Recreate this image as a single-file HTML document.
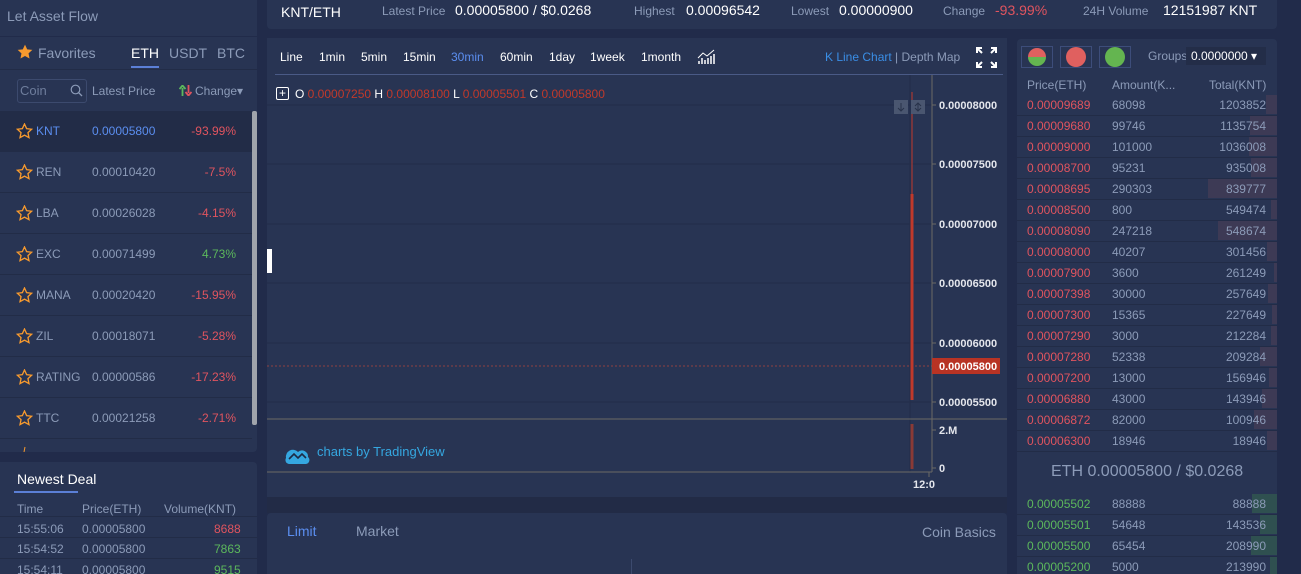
<!DOCTYPE html>
<html><head><meta charset="utf-8"><style>
*{margin:0;padding:0;box-sizing:border-box}
html,body{width:1301px;height:574px;overflow:hidden}
body{background:#212b4a;font-family:"Liberation Sans",sans-serif;font-size:12px;color:#8c9bb8;position:relative}
.a{position:absolute;white-space:nowrap}
.p{position:absolute;background:#283453}
.r{color:#e0545f}.g{color:#5cb85c}.w{color:#fff}
.red{color:#c0392b}
</style></head><body>
<div class="p" style="left:0;top:0;width:257px;height:36px"></div>
<div class="a" style="left:7px;top:8px;font-size:14px;color:#8c9bb8">Let Asset Flow</div>
<div class="p" style="left:0;top:37px;width:257px;height:415px;border-radius:0 0 4px 0"></div>
<div class="a" style="left:0;top:69px;width:257px;height:1px;background:#222c47"></div>
<svg class="a" style="left:17px;top:44px" width="16" height="16" viewBox="0 0 24 24"><path d="M12 1l3.3 7 7.7.9-5.7 5.2 1.5 7.6L12 18l-6.8 3.7 1.5-7.6L1 8.9 8.7 8z" fill="#f79a2e"/></svg>
<div class="a" style="left:38px;top:45px;font-size:14px">Favorites</div>
<div class="a w" style="left:131px;top:45px;font-size:14px">ETH</div>
<div class="a" style="left:131px;top:66px;width:28px;height:2px;background:#5b7fd6"></div>
<div class="a" style="left:169px;top:45px;font-size:14px">USDT</div>
<div class="a" style="left:217px;top:45px;font-size:14px">BTC</div>
<div class="a" style="left:17px;top:79px;width:70px;height:24px;border:1px solid #3c4a6e;border-radius:3px"></div>
<div class="a" style="left:20px;top:83px;font-size:13px;color:#6e7d9c">Coin</div>
<svg class="a" style="left:70px;top:84px" width="13" height="13" viewBox="0 0 13 13"><circle cx="5.5" cy="5.5" r="4.3" fill="none" stroke="#8c9bb8" stroke-width="1.2"/><path d="M8.7 8.7L12 12" stroke="#8c9bb8" stroke-width="1.3"/></svg>
<div class="a" style="left:92px;top:84px">Latest Price</div>
<svg class="a" style="left:179px;top:85px" width="13" height="11" viewBox="0 0 13 11"><path d="M3.5 11V3M0.5 4l3-3.5 3 3.5" stroke="#5cb85c" stroke-width="1.8" fill="none"/><path d="M9.5 0v8M6.5 7l3 3.5 3-3.5" stroke="#e0545f" stroke-width="1.8" fill="none"/></svg>
<div class="a" style="left:195px;top:84px">Change▾</div>
<div class="a" style="left:0;top:111px;width:252px;height:41px;background:#222c47"></div>
<div class="a" style="left:252px;top:111px;width:5px;height:314px;background:#a0a4ab;border-radius:2px"></div>
<div id="coins"></div>
<div class="p" style="left:0;top:462px;width:257px;height:112px;border-radius:0 4px 0 0"></div>
<div class="a w" style="left:17px;top:471px;font-size:14px">Newest Deal</div>
<div class="a" style="left:14px;top:491px;width:64px;height:2px;background:#5b7fd6"></div>
<div class="a" style="left:17px;top:502px">Time</div>
<div class="a" style="left:82px;top:502px">Price(ETH)</div>
<div class="a" style="left:164px;top:502px">Volume(KNT)</div>
<div class="a" style="left:0;top:516px;width:257px;height:1px;background:#222c47"></div>
<div class="a" style="left:17px;top:522px">15:55:06</div><div class="a" style="left:82px;top:522px">0.00005800</div><div class="a r" style="left:214px;top:522px">8688</div>
<div class="a" style="left:0;top:537px;width:257px;height:1px;background:#222c47"></div>
<div class="a" style="left:17px;top:542px">15:54:52</div><div class="a" style="left:82px;top:542px">0.00005800</div><div class="a g" style="left:214px;top:542px">7863</div>
<div class="a" style="left:0;top:558px;width:257px;height:1px;background:#222c47"></div>
<div class="a" style="left:17px;top:563px">15:54:11</div><div class="a" style="left:82px;top:563px">0.00005800</div><div class="a g" style="left:214px;top:563px">9515</div>
<div class="p" style="left:267px;top:0;width:1010px;height:29px;border-radius:0 0 4px 4px"></div>
<div class="a w" style="left:281px;top:4px;font-size:14px">KNT/ETH</div>
<div class="a" style="left:382px;top:4px">Latest Price</div>
<div class="a w" style="left:455px;top:2px;font-size:14px">0.00005800 / $0.0268</div>
<div class="a" style="left:634px;top:4px">Highest</div>
<div class="a w" style="left:686px;top:2px;font-size:14px">0.00096542</div>
<div class="a" style="left:791px;top:4px">Lowest</div>
<div class="a w" style="left:839px;top:2px;font-size:14px">0.00000900</div>
<div class="a" style="left:943px;top:4px">Change</div>
<div class="a r" style="left:995px;top:2px;font-size:14px">-93.99%</div>
<div class="a" style="left:1083px;top:4px">24H Volume</div>
<div class="a w" style="left:1163px;top:2px;font-size:14px">12151987 KNT</div>
<div class="p" style="left:267px;top:38px;width:740px;height:460px"></div>
<div class="a" style="left:267px;top:497px;width:740px;height:16px;background:#222b46"></div>
<div class="a w" style="top:50px;left:280px">Line</div>
<div class="a w" style="top:50px;left:319px">1min</div>
<div class="a w" style="top:50px;left:361px">5min</div>
<div class="a w" style="top:50px;left:403px">15min</div>
<div class="a" style="top:50px;left:451px;color:#5b8ef0">30min</div>
<div class="a w" style="top:50px;left:500px">60min</div>
<div class="a w" style="top:50px;left:549px">1day</div>
<div class="a w" style="top:50px;left:590px">1week</div>
<div class="a w" style="top:50px;left:641px">1month</div>
<svg class="a" style="left:697px;top:48px" width="18" height="16" viewBox="0 0 18 16"><path d="M1 10l5-5 4 3 7-6" stroke="#fff" fill="none"/><path d="M2 16v-3M5 16v-6M8 16v-4M11 16v-6M14 16v-8M17 16v-10" stroke="#fff" stroke-width="1.5"/></svg>
<div class="a" style="top:50px;left:825px;color:#3a8ee6">K Line Chart <span style="color:#8c9bb8">| Depth Map</span></div>
<svg class="a" style="left:976px;top:47px" width="21" height="21" viewBox="0 0 21 21" stroke="#fff" stroke-width="2" fill="none"><path d="M1 6V1h5M1 1l5 5M20 6V1h-5M20 1l-5 5M1 15v5h5M1 20l5-5M20 15v5h-5M20 20l-5-5"/></svg>
<div class="a" style="left:275px;top:74px;width:728px;height:1px;background:#4a5a86"></div>
<svg class="a" style="left:267px;top:75px" width="740" height="420">
<g stroke="#222d4a" stroke-width="1">
<line x1="0" y1="30" x2="665" y2="30"/><line x1="0" y1="89" x2="665" y2="89"/><line x1="0" y1="149" x2="665" y2="149"/><line x1="0" y1="208" x2="665" y2="208"/><line x1="0" y1="268" x2="665" y2="268"/><line x1="0" y1="327" x2="665" y2="327"/>
<line x1="643" y1="0" x2="643" y2="397"/>
</g>
<line x1="665" y1="0" x2="665" y2="397" stroke="#6b6a66"/>
<line x1="0" y1="344" x2="740" y2="344" stroke="#6b6a66"/>
<line x1="0" y1="397" x2="665" y2="397" stroke="#6b6a66"/>
<line x1="0" y1="291" x2="665" y2="291" stroke="#b0463c" stroke-dasharray="2,2" stroke-width="0.8"/>
<line x1="645" y1="17" x2="645" y2="325" stroke="#c0392b"/>
<rect x="643.5" y="119" width="3" height="206" fill="#c0392b"/>
<rect x="643.5" y="349" width="3" height="45" fill="#8a3a36"/>
<rect x="627" y="25" width="14" height="14" fill="#4a5670"/><rect x="644" y="25" width="14" height="14" fill="#4a5670"/>
<path d="M634 28v8M631 33l3 3 3-3M651 28v8M648 31l3-3 3 3M648 33l3 3 3-3" stroke="#28324a" fill="none"/>
<g stroke="#6b6a66"><line x1="665" y1="30" x2="669" y2="30"/><line x1="665" y1="89" x2="669" y2="89"/><line x1="665" y1="149" x2="669" y2="149"/><line x1="665" y1="208" x2="669" y2="208"/><line x1="665" y1="268" x2="669" y2="268"/><line x1="665" y1="327" x2="669" y2="327"/><line x1="665" y1="355" x2="669" y2="355"/><line x1="665" y1="393" x2="669" y2="393"/><line x1="662" y1="397" x2="662" y2="402"/></g>
<rect x="665" y="283" width="68" height="16" fill="#b83324"/>
<g fill="#e4e6ec" font-family="Liberation Sans" font-size="11" font-weight="bold">
<text x="672" y="34">0.00008000</text><text x="672" y="153">0.00007000</text><text x="672" y="93">0.00007500</text><text x="672" y="212">0.00006500</text><text x="672" y="272">0.00006000</text><text x="672" y="331">0.00005500</text><text x="672" y="295" fill="#fff">0.00005800</text><text x="672" y="359">2.M</text><text x="672" y="397">0</text><text x="646" y="413">12:0</text>
</g>
<path d="M19 383a7 7 0 0 1 12-6 6 6 0 0 1 10 5 4 4 0 0 1-2 7H22a4 4 0 0 1-3-6z" fill="#35a7e0"/>
<path d="M22 384l5-5 4 4 4-4 4 4" stroke="#1d2a45" stroke-width="1.6" fill="none"/>
<text x="50" y="381" fill="#35a7e0" font-family="Liberation Sans" font-size="13">charts by TradingView</text>
</svg>
<div class="a" style="left:267px;top:249px;width:5px;height:24px;background:#fff"></div>
<div class="a" style="left:276px;top:87px;width:13px;height:13px;border:1px solid #fff;border-radius:2px;color:#fff;font-size:12px;line-height:10px;text-align:center">+</div>
<div class="a" style="left:295px;top:87px;color:#fff">O <span class="red">0.00007250</span> H <span class="red">0.00008100</span> L <span class="red">0.00005501</span> C <span class="red">0.00005800</span></div>
<div class="p" style="left:267px;top:513px;width:740px;height:61px;border-radius:4px 4px 0 0"></div>
<div class="a" style="left:287px;top:523px;font-size:14px;color:#5b8ef0">Limit</div>
<div class="a" style="left:356px;top:523px;font-size:14px">Market</div>
<div class="a" style="left:922px;top:524px;font-size:14px">Coin Basics</div>
<div class="a" style="left:631px;top:559px;width:1px;height:15px;background:#3c4a6e"></div>
<div class="p" style="left:1017px;top:39px;width:260px;height:535px;border-radius:4px 4px 0 0"></div>
<div class="a" style="left:1021px;top:46px;width:32px;height:22px;border:1px solid #3d4d7a"></div>
<svg class="a" style="left:1027px;top:47px" width="20" height="20"><path d="M1 10a9 9 0 0 1 18 0z" fill="#e0605f"/><path d="M1 10a9 9 0 0 0 18 0z" fill="#64b550"/></svg>
<div class="a" style="left:1060px;top:46px;width:32px;height:22px;border:1px solid #3d4d7a"></div>
<div class="a" style="left:1066px;top:47px;width:20px;height:20px;border-radius:50%;background:#e0605f"></div>
<div class="a" style="left:1099px;top:46px;width:32px;height:22px;border:1px solid #3d4d7a"></div>
<div class="a" style="left:1105px;top:47px;width:20px;height:20px;border-radius:50%;background:#64b550"></div>
<div class="a" style="left:1148px;top:49px">Groups</div>
<div class="a" style="left:1186px;top:47px;width:80px;height:18px;background:#232d48"></div>
<div class="a w" style="left:1191px;top:49px">0.0000000 ▾</div>
<div class="a" style="left:1027px;top:78px">Price(ETH)</div>
<div class="a" style="left:1112px;top:78px">Amount(K...</div>
<div class="a" style="left:1209px;top:78px">Total(KNT)</div>
<div id="ob"></div>
<div class="a" style="left:1017px;top:454px;width:260px;height:36px;background:#283453"></div>
<div class="a" style="left:1051px;top:463px;font-size:16px;color:#8c9bb8">ETH 0.00005800 / $0.0268</div>
<script>
var coins=[["KNT","0.00005800","-93.99%"],["REN","0.00010420","-7.5%"],["LBA","0.00026028","-4.15%"],["EXC","0.00071499","4.73%"],["MANA","0.00020420","-15.95%"],["ZIL","0.00018071","-5.28%"],["RATING","0.00000586","-17.23%"],["TTC","0.00021258","-2.71%"]];
var h="";coins.forEach(function(c,i){var y=111+i*41;
h+='<svg class="a" style="left:16px;top:'+(y+12)+'px" width="17" height="16" viewBox="0 0 24 24"><path d="M12 1.5l3.2 6.9 7.5.9-5.5 5.1 1.5 7.5L12 18.2l-6.7 3.7 1.5-7.5-5.5-5.1 7.5-.9z" fill="none" stroke="#f79a2e" stroke-width="2"/></svg>';
h+='<div class="a" style="left:36px;top:'+(y+13)+'px;color:'+(i==0?'#5b8ef0':'#8c9bb8')+'">'+c[0]+'</div>';
h+='<div class="a" style="left:92px;top:'+(y+13)+'px;color:'+(i==0?'#5b8ef0':'#8c9bb8')+'">'+c[1]+'</div>';
h+='<div class="a '+(c[2][0]=='-'?'r':'g')+'" style="right:'+(1301-236)+'px;top:'+(y+13)+'px">'+c[2]+'</div>';
h+='<div class="a" style="left:0;top:'+(y+40)+'px;width:252px;height:1px;background:#222c47"></div>';});
h+='<svg class="a" style="left:16px;top:446px" width="17" height="6"><path d="M8 6l1-5" stroke="#f79a2e"/></svg>';
document.getElementById("coins").innerHTML=h;
var asks=[["0.00009689","68098","1203852",11],["0.00009680","99746","1135754",27],["0.00009000","101000","1036008",28],["0.00008700","95231","935008",26],["0.00008695","290303","839777",69],["0.00008500","800","549474",6],["0.00008090","247218","548674",59],["0.00008000","40207","301456",10],["0.00007900","3600","261249",3],["0.00007398","30000","257649",9],["0.00007300","15365","227649",5],["0.00007290","3000","212284",6],["0.00007280","52338","209284",17],["0.00007200","13000","156946",8],["0.00006880","43000","143946",15],["0.00006872","82000","100946",23],["0.00006300","18946","18946",10]];
var bids=[["0.00005502","88888","88888",25],["0.00005501","54648","143536",17],["0.00005500","65454","208990",26],["0.00005200","5000","213990",7]];
var o="";function row(r,y,cl,bar){o+='<div class="a" style="left:'+(1277-r[3])+'px;top:'+(y)+'px;width:'+r[3]+'px;height:19px;background:'+bar+'"></div>';
o+='<div class="a '+cl+'" style="left:1027px;top:'+(y+3)+'px">'+r[0]+'</div><div class="a" style="left:1112px;top:'+(y+3)+'px">'+r[1]+'</div><div class="a" style="right:35px;top:'+(y+3)+'px">'+r[2]+'</div>';
o+='<div class="a" style="left:1017px;top:'+(y+20)+'px;width:260px;height:1px;background:#222c47"></div>';}
asks.forEach(function(r,i){row(r,95+i*21,"r","#3d3a55")});
bids.forEach(function(r,i){row(r,494+i*21,"g","#2f5050")});
document.getElementById("ob").innerHTML=o;
</script>
</body></html>
